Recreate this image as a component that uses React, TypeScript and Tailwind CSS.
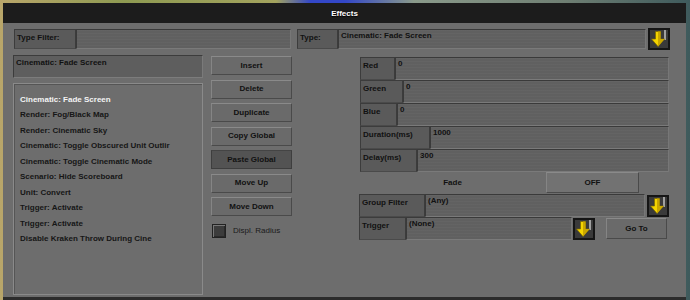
import type { ReactNode } from "react";

// Scenario editor "Effects" dialog — grey bevelled game UI over the map.

const LIST = [
  "Cinematic: Fade Screen",
  "Render: Fog/Black Map",
  "Render: Cinematic Sky",
  "Cinematic: Toggle Obscured Unit Outlir",
  "Cinematic: Toggle Cinematic Mode",
  "Scenario: Hide Scoreboard",
  "Unit: Convert",
  "Trigger: Activate",
  "Trigger: Activate",
  "Disable Kraken Throw During Cine",
];

const BUTTONS = ["Insert", "Delete", "Duplicate", "Copy Global", "Paste Global", "Move Up", "Move Down"];

const PROPS = [
  { label: "Red", w: "w-[35px]", value: "0" },
  { label: "Green", w: "w-[43px]", value: "0" },
  { label: "Blue", w: "w-[37px]", value: "0" },
  { label: "Duration(ms)", w: "w-[70px]", value: "1000" },
  { label: "Delay(ms)", w: "w-[57px]", value: "300" },
];

function Label({ className, children }: { className: string; children: ReactNode }) {
  return (
    <div
      className={`${className} h-full shrink-0 border border-[#3c3c3c] border-b-[#4a4a4a] bg-[#5a5a5a] pl-[2px] pt-[4px] font-bold text-[#111]`}
    >
      {children}
    </div>
  );
}

function Field({ className = "flex-1", children }: { className?: string; children?: ReactNode }) {
  return (
    <div
      className={`${className} h-full border border-[#3a3a3a] border-r-[#777] border-b-[#7a7a7a] bg-[#606060] bg-[repeating-linear-gradient(180deg,rgba(255,255,255,0.025)_0px,rgba(255,255,255,0.025)_1px,transparent_1px,transparent_3px)] pl-[2px] pt-[2px] font-bold text-[#111]`}
    >
      {children}
    </div>
  );
}

function ArrowBtn() {
  return (
    <svg width="22" height="22" viewBox="0 0 22 22" className="shrink-0">
      <rect x="0" y="0" width="22" height="22" fill="#151515" />
      <rect x="2" y="2" width="18" height="18" fill="#3a3a3a" />
      <rect x="16" y="2" width="2" height="10" fill="#a0a0a0" />
      <path d="M7.5 3.5h5v7.5h4l-6.5 7.5-6.5-7.5h4z" fill="#f4d400" stroke="#7a6500" strokeWidth="0.7" />
      <path d="M10 3.5h2.5v7.5h4L10 18.5z" fill="#c9a600" />
    </svg>
  );
}

function Bevel({ className, dark, children }: { className: string; dark?: boolean; children: ReactNode }) {
  return (
    <button
      type="button"
      className={`${className} flex shrink-0 items-center justify-center border font-bold text-[#111] ${
        dark
          ? "border-[#3e3e3e] border-t-[#444] bg-[#535353]"
          : "border-[#4a4a4a] border-t-[#8a8a8a] border-l-[#858585] bg-[#6a6a6a]"
      }`}
    >
      {children}
    </button>
  );
}

export default function App() {
  return (
    <div className="flex h-[300px] w-[690px] flex-col bg-[linear-gradient(to_right,#b9a66a_0%,#8e9a52_18%,#a3a35e_40%,#3347c8_45%,#3347c8_50%,#8a9a8a_60%,#6f7f73_82%,#3e5a5c_100%)] pl-[3px] pr-[4px] pt-[3px] text-[8px] leading-none [font-family:'Liberation_Sans',Arial,sans-serif]">
      <div className="flex h-[20px] shrink-0 items-center justify-center bg-[#1c1c1c] pt-[2px] font-bold text-white [text-shadow:0_1px_1px_#000]">
        Effects
      </div>

      <div className="flex flex-1 flex-col border-b-[3px] border-[#2c2c2c] bg-[#6d6d6d] pl-[10px] pt-[6px]">
        {/* top row: type filter + type */}
        <div className="flex h-[20px] items-center">
          <div className="ml-[1px] flex h-full w-[277px]">
            <Label className="w-[62px]">Type Filter:</Label>
            <Field />
          </div>
          <div className="ml-[6px] flex h-full items-center">
            <Label className="w-[41px]">Type:</Label>
            <Field className="w-[308px]">Cinematic: Fade Screen</Field>
            <div className="ml-[2px]">
              <ArrowBtn />
            </div>
          </div>
        </div>

        <div className="mt-[6px] flex">
          {/* effect list */}
          <div className="flex w-[190px] flex-col">
            <div className="h-[23px] border border-[#3c3c3c] border-b-[#7c7c7c] border-r-[#7a7a7a] bg-[#5e5e5e] pl-[2px] pt-[3px] font-bold text-[#111]">
              Cinematic: Fade Screen
            </div>
            <div className="mt-[5px] h-[212px] border border-[#8a8a8a] shadow-[inset_1px_1px_0_#555] pl-[6px] pt-[8px]">
              {LIST.map((item, i) => (
                <div
                  key={i}
                  className={`flex h-[15.5px] items-center whitespace-nowrap font-bold ${i === 0 ? "text-[#f4f4f4]" : "text-[#161616]"}`}
                >
                  {item}
                </div>
              ))}
            </div>
          </div>

          {/* action buttons */}
          <div className="ml-[8px] mt-[1px] flex w-[81px] flex-col gap-[4.5px]">
            {BUTTONS.map((b) => (
              <Bevel key={b} className="h-[19px] w-full" dark={b === "Paste Global"}>
                {b}
              </Bevel>
            ))}
            <div className="mt-[3px] flex items-center">
              <div className="ml-[1px] h-[14px] w-[14px] border border-[#222] bg-[#3c3c3c] shadow-[inset_1px_1px_0_#777,inset_-1px_-1px_0_#2a2a2a]" />
              <span className="ml-[7px] text-[#1a1a1a]">Displ. Radius</span>
            </div>
          </div>

          {/* effect properties */}
          <div className="ml-[67px] mt-[2px] flex w-[310px] flex-col">
            {PROPS.map((p) => (
              <div key={p.label} className="flex h-[23px] pl-[1px]">
                <Label className={p.w}>{p.label}</Label>
                <Field>{p.value}</Field>
              </div>
            ))}
            <div className="flex h-[21px] items-center">
              <div className="w-[187px] text-center font-bold text-[#111]">Fade</div>
              <Bevel className="h-[21px] w-[93px] bg-[#727272]">OFF</Bevel>
            </div>
            <div className="mt-[1px] flex h-[23px] items-center">
              <Label className="w-[66px]">Group Filter</Label>
              <Field className="w-[220px]">(Any)</Field>
              <div className="ml-[2px]">
                <ArrowBtn />
              </div>
            </div>
            <div className="flex h-[23px] items-center">
              <Label className="w-[47px]">Trigger</Label>
              <Field className="w-[166px]">(None)</Field>
              <div className="ml-[1px]">
                <ArrowBtn />
              </div>
              <Bevel className="ml-[11px] h-[21px] w-[61px]">Go To</Bevel>
            </div>
          </div>
        </div>
      </div>
    </div>
  );
}
